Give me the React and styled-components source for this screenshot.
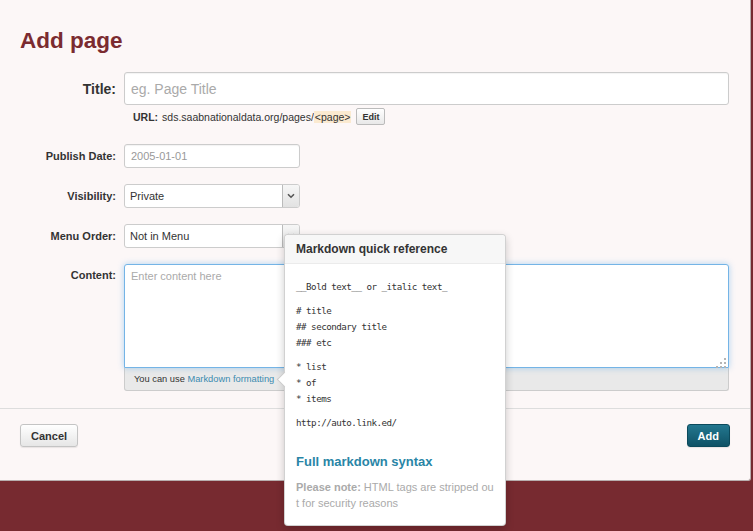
import React from 'react'
import styled, { createGlobalStyle } from 'styled-components'

const GlobalStyle = createGlobalStyle`
    body {
        margin: 0;
        background-color: #772a30;
        font-family: "Liberation Sans", Arial, sans-serif;
        color: #333;
    }
`

const Page = styled.div`
    position: relative;
    height: 531px;
    overflow: hidden;
`

const Modal = styled.div`
    width: 751px;
    height: 481px;
    box-sizing: border-box;
    display: flex;
    flex-direction: column;
    background-color: #fcf7f7;
    border-right: 1px solid #b8aeae;
    border-bottom: 1px solid #b8aeae;
    border-bottom-right-radius: 3px;
`

const Body = styled.div`
    padding: 27px 21px 17px 20px;
`

const Heading = styled.h1`
    margin: 0 0 18px;
    font-size: 22.5px;
    line-height: 27px;
    font-weight: bold;
    color: #7b2b30;
`

const Row = styled.div`
    display: grid;
    grid-template-columns: 96px 1fr;
    column-gap: 8px;
    align-items: ${props => props.top ? 'start' : 'center'};
    margin-bottom: ${props => props.gap ?? 16}px;
`

const Label = styled.label`
    text-align: right;
    font-weight: bold;
    font-size: ${props => props.big ? 14 : 11}px;
    line-height: ${props => props.top ? '22px' : 'normal'};
    color: #333;
`

const TextInput = styled.input`
    box-sizing: border-box;
    width: ${props => props.narrow ? '176px' : '100%'};
    height: ${props => props.big ? 33 : 24}px;
    padding: 0 6px;
    border: 1px solid #ccc;
    border-radius: 3px;
    background: #fff;
    box-shadow: inset 0 1px 1px rgba(0, 0, 0, 0.05);
    font-family: inherit;
    font-size: ${props => props.big ? 14 : 11}px;
    color: ${props => props.muted ? '#999' : '#333'};
    outline: none;

    &::placeholder {
        color: #aaa;
    }
`

const UrlLine = styled.div`
    grid-column: 2;
    display: flex;
    align-items: center;
    margin-top: 3px;
    padding-left: 9px;
    height: 17px;
    font-size: 10.5px;
    color: #333;

    b {
        margin-right: 4px;
    }
`

const Slug = styled.span`
    background-color: #fbead0;
    padding: 0 1px;
`

const SmallButton = styled.button`
    height: 17px;
    margin-left: 5px;
    padding: 0 5px;
    border: 1px solid #bbb;
    border-radius: 2px;
    background: linear-gradient(#fff, #e8e8e8);
    font-family: inherit;
    font-size: 9px;
    font-weight: bold;
    color: #333;
    cursor: pointer;
`

const SelectWrap = styled.div`
    position: relative;
    width: 176px;
    height: 24px;
`

const Select = styled.select`
    box-sizing: border-box;
    width: 100%;
    height: 100%;
    padding: 0 22px 0 5px;
    appearance: none;
    border: 1px solid #ccc;
    border-radius: 3px;
    background: #fff;
    font-family: inherit;
    font-size: 11px;
    color: #333;
    outline: none;
`

const SelectArrow = styled.span`
    position: absolute;
    top: 1px;
    right: 1px;
    bottom: 1px;
    width: 16px;
    display: flex;
    align-items: center;
    justify-content: center;
    border-left: 1px solid #bbb;
    background: linear-gradient(#f6f6f6, #e2e2e2);
    border-radius: 0 2px 2px 0;
    pointer-events: none;
`

const Editor = styled.div`
    position: relative;
`

const TextArea = styled.textarea`
    display: block;
    box-sizing: border-box;
    width: 100%;
    height: 104px;
    padding: 5px 6px;
    border: 1px solid #74b4e6;
    border-radius: 3px 3px 0 0;
    box-shadow: 0 0 6px rgba(82, 168, 236, 0.45);
    resize: none;
    font-family: inherit;
    font-size: 11px;
    color: #333;
    outline: none;

    &::placeholder {
        color: #aaa;
    }
`

const Grip = styled.svg`
    position: absolute;
    right: 3px;
    top: 94px;
`

const HelpBar = styled.div`
    box-sizing: border-box;
    height: 23px;
    padding-left: 9px;
    display: flex;
    align-items: center;
    background-color: #e9e9e9;
    border: 1px solid #ccc;
    border-top: 0;
    border-radius: 0 0 3px 3px;
    font-size: 9.3px;
    color: #333;
`

const Link = styled.a`
    color: ${props => props.strong ? '#2985a6' : '#3b8bb0'};
    font-weight: ${props => props.strong ? 'bold' : 'normal'};
    text-decoration: none;
`

const Footer = styled.div`
    flex: 1;
    display: flex;
    justify-content: space-between;
    align-items: flex-start;
    padding: 15px 20px 0;
    border-top: 1px solid #ddd;
`

const Button = styled.button`
    height: 23px;
    padding: 0 10px;
    border: 1px solid ${props => props.primary ? '#0c4a5c' : '#c4c4c4'};
    border-radius: 3px;
    background: ${props => props.primary
        ? 'linear-gradient(#23778f, #0f5266)'
        : 'linear-gradient(#fff, #e6e6e6)'};
    box-shadow: 0 1px 1px rgba(0, 0, 0, 0.08);
    font-family: inherit;
    font-size: 11px;
    font-weight: bold;
    color: ${props => props.primary ? '#fff' : '#333'};
    cursor: pointer;
`

const Popover = styled.div`
    position: absolute;
    left: 284px;
    top: 234px;
    width: 222px;
    box-sizing: border-box;
    background: #fff;
    border: 1px solid rgba(0, 0, 0, 0.18);
    border-radius: 4px;
    box-shadow: 0 3px 8px rgba(0, 0, 0, 0.2);
`

const PopArrow = styled.span`
    position: absolute;
    left: -6px;
    top: 139px;
    width: 10px;
    height: 10px;
    background: #fff;
    border-left: 1px solid rgba(0, 0, 0, 0.2);
    border-bottom: 1px solid rgba(0, 0, 0, 0.2);
    transform: rotate(45deg);
`

const PopHeader = styled.div`
    height: 28px;
    padding: 0 11px;
    display: flex;
    align-items: center;
    background: #f7f7f7;
    border-bottom: 1px solid #ebebeb;
    border-radius: 4px 4px 0 0;
    font-size: 12px;
    font-weight: bold;
    color: #333;
`

const PopBody = styled.div`
    padding: 15px 11px 14px;
`

const Code = styled.div`
    margin-bottom: 8px;
    font-family: "DejaVu Sans Mono", "Liberation Mono", monospace;
    font-size: 9.2px;
    letter-spacing: -0.5px;
    line-height: 16px;
    color: #333;
    white-space: pre;
`

const SyntaxLink = styled.div`
    margin-top: 22px;
    font-size: 13px;
    line-height: 18px;
`

const Note = styled.p`
    margin: 8px 0 0;
    font-size: 11px;
    line-height: 16px;
    color: #aaa;
    word-break: break-all;
`

const Chevron = () => (
    <svg width="8" height="6" viewBox="0 0 8 6">
        <path d="M1 1.2 L4 4.2 L7 1.2" fill="none" stroke="#555" strokeWidth="1.6" />
    </svg>
)

const GripDots = () => (
    <Grip width="10" height="10" viewBox="0 0 10 10">
        {[[8, 0], [4, 4], [8, 4], [0, 8], [4, 8], [8, 8]].map(([x, y]) => (
            <rect key={`${x}-${y}`} x={x} y={y} width="2" height="2" fill="#b5b5b5" />
        ))}
    </Grip>
)

const App = () => {
    return (
        <Page>
            <GlobalStyle />
            <Modal>
                <Body>
                    <Heading>Add page</Heading>

                    <Row gap={19}>
                        <Label big>Title:</Label>
                        <TextInput big placeholder="eg. Page Title" />
                        <UrlLine>
                            <b>URL:</b>
                            sds.saabnationaldata.org/pages/<Slug>&lt;page&gt;</Slug>
                            <SmallButton>Edit</SmallButton>
                        </UrlLine>
                    </Row>

                    <Row>
                        <Label>Publish Date:</Label>
                        <TextInput narrow muted defaultValue="2005-01-01" />
                    </Row>

                    <Row>
                        <Label>Visibility:</Label>
                        <SelectWrap>
                            <Select defaultValue="private">
                                <option value="private">Private</option>
                                <option value="public">Public</option>
                            </Select>
                            <SelectArrow><Chevron /></SelectArrow>
                        </SelectWrap>
                    </Row>

                    <Row>
                        <Label>Menu Order:</Label>
                        <SelectWrap>
                            <Select defaultValue="none">
                                <option value="none">Not in Menu</option>
                            </Select>
                            <SelectArrow><Chevron /></SelectArrow>
                        </SelectWrap>
                    </Row>

                    <Row top gap={0}>
                        <Label top>Content:</Label>
                        <div>
                            <Editor>
                                <TextArea placeholder="Enter content here" />
                                <GripDots />
                            </Editor>
                            <HelpBar>
                                You can use&nbsp;<Link href="#">Markdown formatting</Link>
                            </HelpBar>
                        </div>
                    </Row>
                </Body>

                <Footer>
                    <Button>Cancel</Button>
                    <Button primary>Add</Button>
                </Footer>
            </Modal>

            <Popover>
                <PopArrow />
                <PopHeader>Markdown quick reference</PopHeader>
                <PopBody>
                    <Code>__Bold text__ or _italic text_</Code>
                    <Code>{'# title\n## secondary title\n### etc'}</Code>
                    <Code>{'* list\n* of\n* items'}</Code>
                    <Code>http://auto.link.ed/</Code>
                    <SyntaxLink>
                        <Link href="#" strong>Full markdown syntax</Link>
                    </SyntaxLink>
                    <Note>
                        <b>Please note:</b> HTML tags are stripped out for security reasons
                    </Note>
                </PopBody>
            </Popover>
        </Page>
    )
}

export default App
